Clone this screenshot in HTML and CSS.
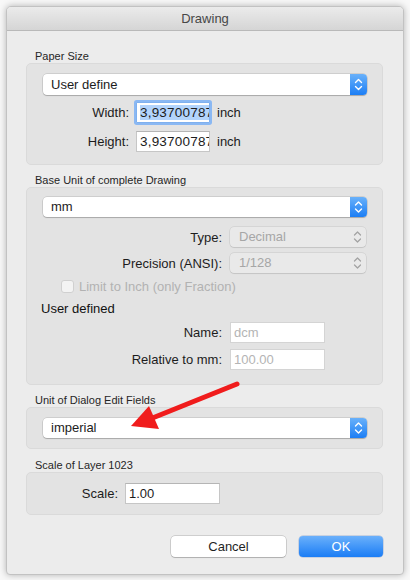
FILE: index.html
```html
<!DOCTYPE html>
<html>
<head>
<meta charset="utf-8">
<link rel="stylesheet" href="styles.css">
</head>
<body>
<div class="window">
  <div class="titlebar">Drawing</div>
  <div class="content">
    <div class="glabel first">Paper Size</div>
    <div class="group g1">
      <div class="popup">
        <span class="ptext">User define</span>
        <span class="stepper blue"><svg width="17" height="21" viewBox="0 0 17 21"><path d="M5.5 8.5 L8.5 5.5 L11.5 8.5 M5.5 12.5 L8.5 15.5 L11.5 12.5" fill="none" stroke="#fff" stroke-width="1.4" stroke-linecap="round" stroke-linejoin="round"/></svg></span>
      </div>
      <div class="row r-w">
        <label class="lab lab-paper">Width:</label>
        <div class="field f-paper focused"><span class="sel">3,93700787</span></div>
        <span class="unit">inch</span>
      </div>
      <div class="row r-h">
        <label class="lab lab-paper">Height:</label>
        <div class="field f-paper"><span>3,93700787</span></div>
        <span class="unit">inch</span>
      </div>
    </div>

    <div class="glabel">Base Unit of complete Drawing</div>
    <div class="group g2">
      <div class="popup short">
        <span class="ptext">mm</span>
        <span class="stepper blue"><svg width="17" height="20" viewBox="0 0 17 20"><path d="M5.5 8 L8.5 5 L11.5 8 M5.5 12 L8.5 15 L11.5 12" fill="none" stroke="#fff" stroke-width="1.4" stroke-linecap="round" stroke-linejoin="round"/></svg></span>
      </div>
      <div class="row r-type">
        <label class="lab lab-base">Type:</label>
        <div class="popup disabled dpop">
          <span class="ptext">Decimal</span>
          <span class="stepper"><svg width="17" height="20" viewBox="0 0 17 20"><path d="M5.5 8 L8.5 5 L11.5 8 M5.5 12 L8.5 15 L11.5 12" fill="none" stroke="#a3a3a3" stroke-width="1.3" stroke-linecap="round" stroke-linejoin="round"/></svg></span>
        </div>
      </div>
      <div class="row r-prec">
        <label class="lab lab-base">Precision (ANSI):</label>
        <div class="popup disabled dpop">
          <span class="ptext">1/128</span>
          <span class="stepper"><svg width="17" height="20" viewBox="0 0 17 20"><path d="M5.5 8 L8.5 5 L11.5 8 M5.5 12 L8.5 15 L11.5 12" fill="none" stroke="#a3a3a3" stroke-width="1.3" stroke-linecap="round" stroke-linejoin="round"/></svg></span>
        </div>
      </div>
      <div class="row r-check">
        <span class="checkbox"></span>
        <span class="clabel">Limit to Inch (only Fraction)</span>
      </div>
      <div class="subhead">User defined</div>
      <div class="row r-name">
        <label class="lab lab-base">Name:</label>
        <div class="field f-base dim"><span>dcm</span></div>
      </div>
      <div class="row r-rel">
        <label class="lab lab-base">Relative to mm:</label>
        <div class="field f-base dim"><span>100.00</span></div>
      </div>
    </div>

    <div class="glabel">Unit of Dialog Edit Fields</div>
    <div class="group g3">
      <div class="popup short">
        <span class="ptext">imperial</span>
        <span class="stepper blue"><svg width="17" height="20" viewBox="0 0 17 20"><path d="M5.5 8 L8.5 5 L11.5 8 M5.5 12 L8.5 15 L11.5 12" fill="none" stroke="#fff" stroke-width="1.4" stroke-linecap="round" stroke-linejoin="round"/></svg></span>
      </div>
    </div>

    <div class="glabel g4label">Scale of Layer 1023</div>
    <div class="group g4">
      <div class="row">
        <label class="lab lab-scale">Scale:</label>
        <div class="field f-base"><span>1.00</span></div>
      </div>
    </div>

    <div class="buttons">
      <div class="btn cancel">Cancel</div>
      <div class="btn ok">OK</div>
    </div>
  </div>
</div>
<svg class="arrow" width="410" height="580" viewBox="0 0 410 580">
  <line x1="237" y1="384" x2="150" y2="419" stroke="#f01c1c" stroke-width="5" stroke-linecap="round"/>
  <polygon points="131,426 149,406 159,429" fill="#f01c1c"/>
</svg>
</body>
</html>
```
FILE: styles.css
```css
* { box-sizing: border-box; }
html, body { margin: 0; padding: 0; }
body {
  width: 410px;
  height: 580px;
  overflow: hidden;
  position: relative;
  background: #f8f8f8;
  font-family: "Liberation Sans", Arial, sans-serif;
  font-size: 13px;
  color: #1c1c1c;
}
.window {
  margin: 6px 6px 0 6px;
  width: 398px;
  height: 569px;
  background: #ececec;
  border: 1px solid #c2c2c2;
  border-radius: 5px 5px 4px 4px;
  box-shadow: 0 0 7px rgba(0,0,0,0.28);
  overflow: hidden;
  display: flex;
  flex-direction: column;
}
.titlebar {
  flex: none;
  height: 24px;
  background: linear-gradient(#ebebeb, #d5d5d5);
  border-bottom: 1px solid #b9b9b9;
  text-align: center;
  line-height: 23px;
  color: #474747;
  font-size: 13px;
}
.content {
  padding: 0 20px 17px 19px;
  display: flex;
  flex-direction: column;
}
.glabel {
  height: 22px;
  padding: 8px 0 0 9px;
  line-height: 14px;
  font-size: 11px;
  color: #262626;
}
.glabel.first { height: 32px; padding-top: 18px; }
.glabel.g4label { height: 23px; padding-top: 9px; }
.group {
  background: #e3e3e3;
  border: 1px solid #dadada;
  border-radius: 5px;
  padding: 10px 15px 12px 16px;
}
.g2 { padding-top: 9px; padding-bottom: 14px; }
.g3 { padding-top: 10px; padding-bottom: 10px; }
.g4 { padding-top: 10px; padding-bottom: 10px; }

.popup {
  height: 21px;
  display: flex;
  align-items: center;
  background: #fff;
  border-radius: 4px;
  box-shadow: 0 0 0 0.5px rgba(0,0,0,0.18), 0 1px 1px rgba(0,0,0,0.18);
  overflow: hidden;
}
.popup.short { height: 20px; }
.ptext { flex: 1; padding-left: 8px; line-height: 16px; }
.stepper { width: 17px; height: 100%; display: flex; align-items: center; justify-content: center; }
.stepper svg { display: block; }
.stepper.blue { background: linear-gradient(#69b1fa, #1c7ef5); }
.popup.disabled {
  height: 20px;
  background: #e9e9e9;
  box-shadow: 0 0 0 0.5px rgba(0,0,0,0.12), 0 1px 1px rgba(0,0,0,0.08);
  color: #a6a6a6;
}
.popup.disabled .ptext { padding-left: 9px; }
.dpop { width: 136px; }

.row { display: flex; align-items: center; }
.r-w { margin-top: 7px; }
.r-h { margin-top: 8px; }
.r-type { margin-top: 10px; }
.r-prec { margin-top: 6px; }
.r-check { margin-top: 6px; height: 14px; padding-left: 18px; }
.r-name { margin-top: 5px; }
.r-rel { margin-top: 6px; }

.lab { text-align: right; flex: none; }
.lab-paper { width: 86px; margin-right: 7px; }
.lab-base { width: 179px; margin-right: 8px; }
.lab-scale { width: 75px; margin-right: 7px; }

.field {
  height: 21px;
  background: #fff;
  border: 1px solid #c6c6c6;
  border-top-color: #b5b5b5;
  padding-left: 3px;
  line-height: 19px;
  white-space: nowrap;
  overflow: hidden;
  flex: none;
}
.f-paper { width: 74px; font-size: 13.5px; letter-spacing: 0.2px; }
.f-base { width: 95px; }
.field.dim { color: #b4b4b4; border-color: #d4d4d4; }
.field.focused {
  border-color: #7fb0ee;
  box-shadow: 0 0 0 2px #8ab8f3;
  border-radius: 1px;
}
.sel { background: #b3d4fc; }
.unit { margin-left: 7px; }

.checkbox {
  width: 13px;
  height: 13px;
  border: 1px solid #d0d0d0;
  border-radius: 3px;
  background: #f3f3f3;
  margin-right: 5px;
}
.clabel { color: #b2b2b2; }
.subhead {
  margin-top: 8px;
  height: 16px;
  line-height: 16px;
  margin-left: -2px;
  color: #111;
}

.buttons {
  display: flex;
  justify-content: flex-end;
  gap: 13px;
  margin-top: 21px;
}
.btn {
  height: 21px;
  line-height: 21px;
  text-align: center;
  border-radius: 4px;
}
.btn.cancel {
  width: 115px;
  background: #fff;
  box-shadow: 0 0 0 0.5px rgba(0,0,0,0.25), 0 1px 1px rgba(0,0,0,0.15);
  color: #1f1f1f;
}
.btn.ok {
  width: 84px;
  background: linear-gradient(#6ab0fb, #1b7df5);
  color: #fff;
  box-shadow: 0 0 0 0.5px rgba(0,60,160,0.3);
}
.arrow {
  position: absolute;
  left: 0;
  top: 0;
  pointer-events: none;
}
```
